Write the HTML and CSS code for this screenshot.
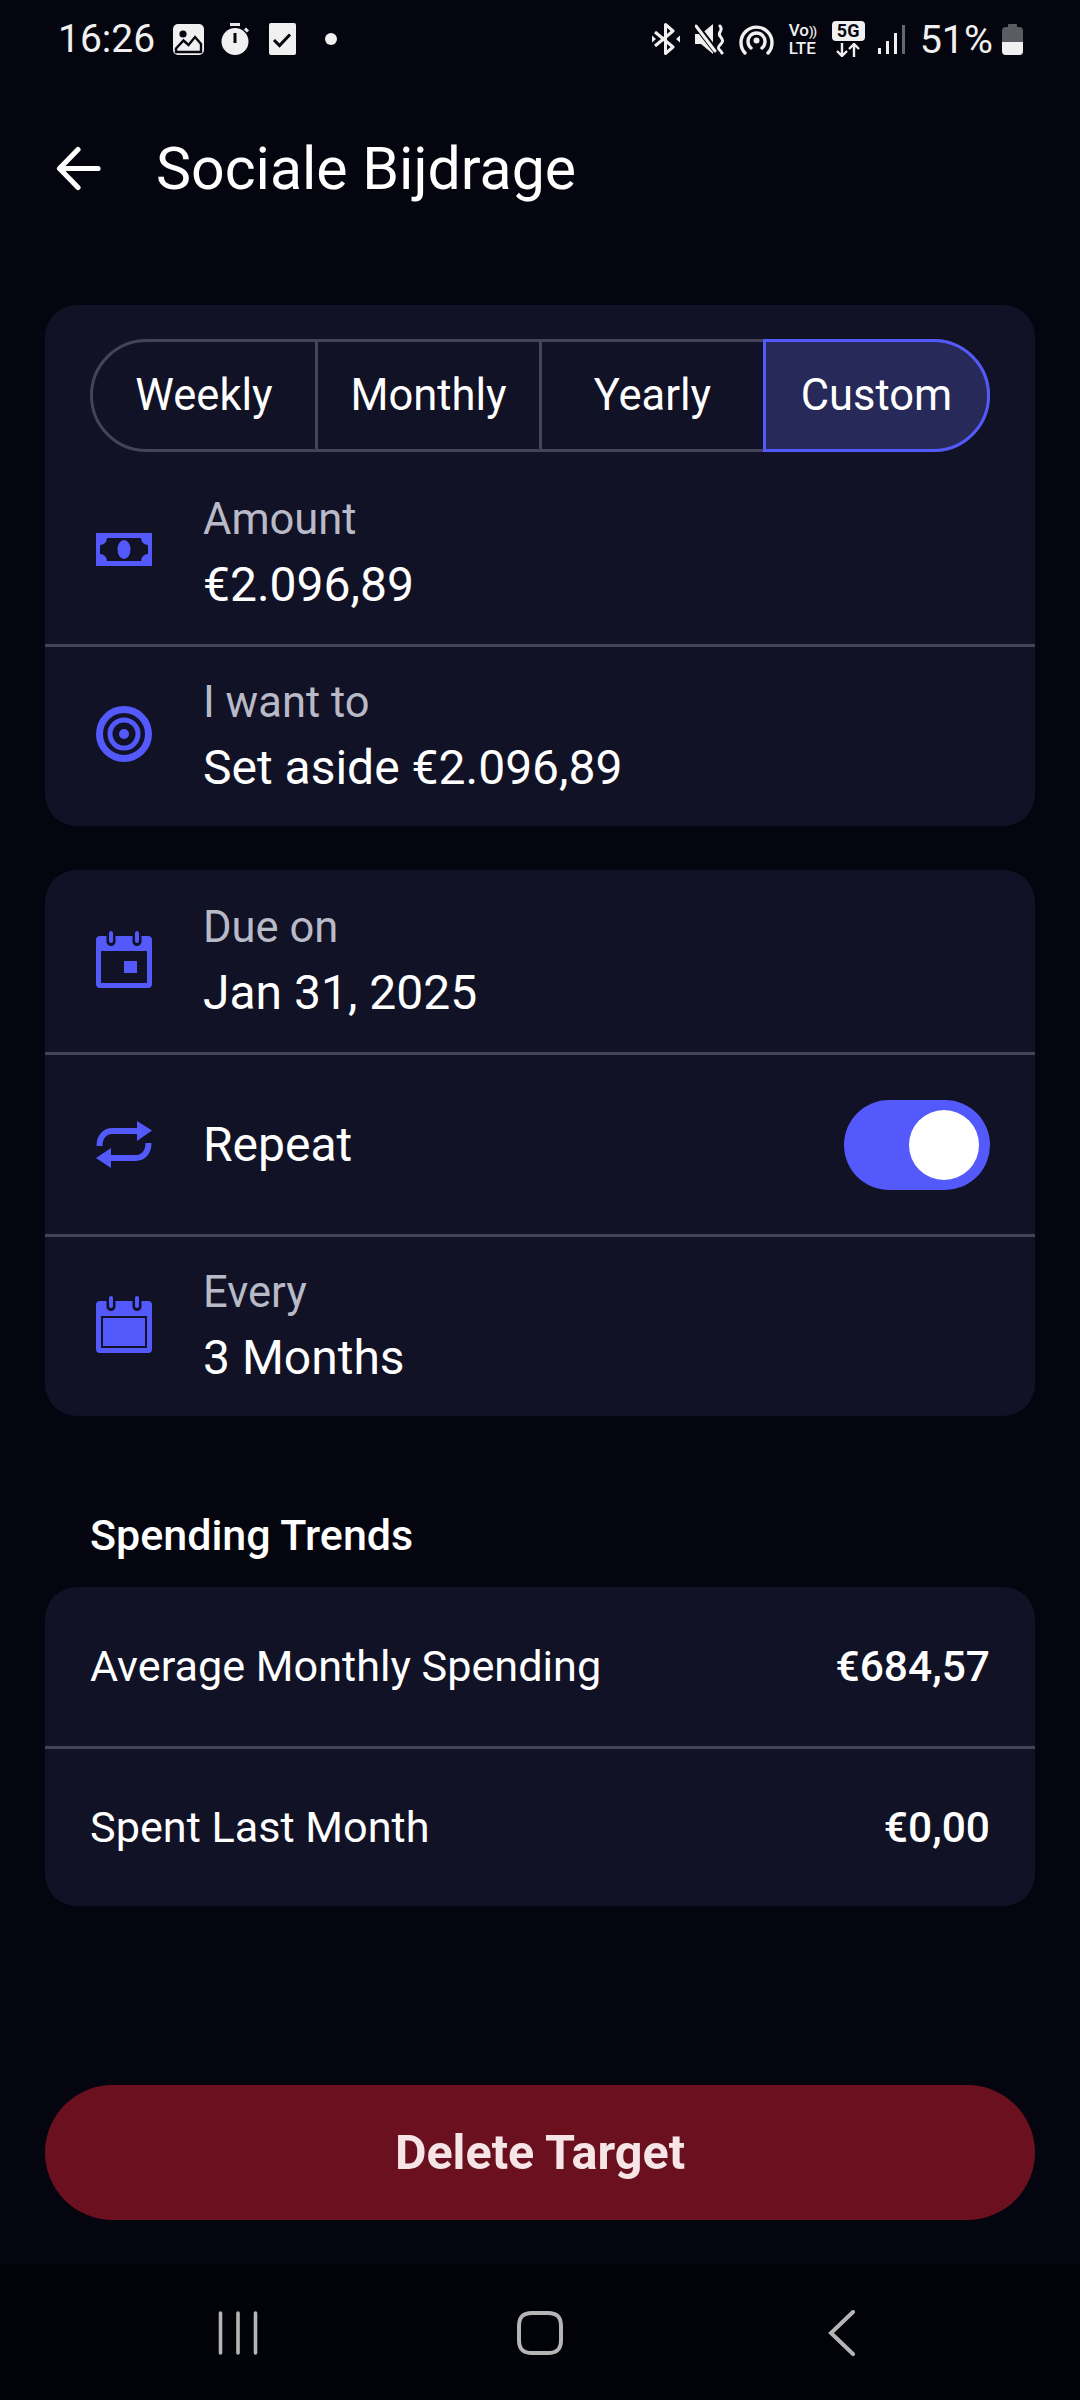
FILE: index.html
```html
<!DOCTYPE html>
<html lang="en">
<head>
<meta charset="utf-8">
<title>Sociale Bijdrage</title>
<link rel="stylesheet" href="styles.css">
</head>
<body>
<div class="phone">
  <header class="status">
    <div class="status-left">
      <span class="time">16:26</span>
      <svg class="s-img" viewBox="0 0 31 31"><rect width="31" height="31" rx="5" fill="#f0f0f0"/><circle cx="10" cy="10" r="3.6" fill="#05060f"/><path d="M3 24.5l7.500-8 5 4.500 6.500-8 6 7v8H3z" fill="#f0f0f0" stroke="#05060f" stroke-width="2.400"/></svg>
      <svg class="s-timer" viewBox="0 0 28 32"><path d="M9 1.500h10" stroke="#e8e8e8" stroke-width="3"/><circle cx="14" cy="18.500" r="13.500" fill="#f0f0f0"/><path d="M24 5.500l3 3" stroke="#e8e8e8" stroke-width="3"/><path d="M14 10v10" stroke="#05060f" stroke-width="3"/></svg>
      <svg class="s-check" viewBox="0 0 27 32"><rect width="27" height="32" rx="2" fill="#f0f0f0"/><path d="M5 17l5.500 5.500L21 11.500" fill="none" stroke="#05060f" stroke-width="3"/></svg>
      <span class="dot"></span>
    </div>
    <div class="status-right">
      <svg class="s-bt" viewBox="0 0 28 32"><path d="M3 9l18 15-7.500 6.500V1.500L21 8 3 23" fill="none" stroke="#f0f0f0" stroke-width="3" stroke-linejoin="round"/><path d="M0 12.500v7l4-3.500zM28 12.500v7l-4-3.500z" fill="#f0f0f0"/></svg>
      <svg class="s-mute" viewBox="0 0 30 32"><path d="M0 11h6l12-10v30L6 21H0z" fill="#f0f0f0"/><path d="M0 1l20 26" stroke="#05060f" stroke-width="6"/><path d="M1 3l19 25" stroke="#f0f0f0" stroke-width="3" stroke-linecap="round"/><path d="M25 3c4 5-3 6 0 10s4 5 0 9 0 4 2 8" fill="none" stroke="#f0f0f0" stroke-width="3" stroke-linecap="round"/></svg>
      <svg class="s-hot" viewBox="0 0 35 32"><g fill="none" stroke="#f0f0f0" stroke-width="3.400" stroke-linecap="round"><path d="M6 30a15.500 15.500 0 1 1 23 0"/><path d="M12 25a8.500 8.500 0 1 1 11 0"/></g><circle cx="17.500" cy="17.500" r="3" fill="#f0f0f0"/></svg>
      <span class="volte"><b>Vo<i>))</i></b><b>LTE</b></span>
      <span class="fiveg"><b>5G</b><svg class="arrows" viewBox="0 0 26 14"><path d="M7 0v12M2 8l5 5 5-5M19 14V2M14 6l5-5 5 5" fill="none" stroke="#f0f0f0" stroke-width="2.400"/></svg></span>
      <svg class="s-bars" viewBox="0 0 27 29"><path d="M1.500 23v6M9.500 16v13M17.500 8v21" stroke="#f0f0f0" stroke-width="3"/><path d="M25.500 0v29" stroke="#66666c" stroke-width="3"/></svg>
      <span class="pct">51%</span>
      <svg class="s-batt" viewBox="0 0 21 31"><rect x="6" width="9" height="4" rx="1" fill="#5b5b62"/><rect y="3" width="21" height="28" rx="4" fill="#5b5b62"/><path d="M0 18h21v9a4 4 0 0 1-4 4H4a4 4 0 0 1-4-4z" fill="#f0f0f0"/></svg>
    </div>
  </header>

  <div class="appbar">
    <svg class="back" viewBox="0 0 46 46"><path d="M43 23.500H5M23 4.500L4.500 23.500 23 42.500" fill="none" stroke="#fff" stroke-width="5.200" stroke-linecap="round" stroke-linejoin="round"/></svg>
    <h1>Sociale Bijdrage</h1>
  </div>

  <main class="content">
    <section class="card first">
      <div class="segments">
        <div class="seg">Weekly</div>
        <div class="seg">Monthly</div>
        <div class="seg">Yearly</div>
        <div class="seg on">Custom</div>
      </div>
      <div class="row short">
        <svg class="ic ic-money" viewBox="0 0 56 33"><path fill-rule="evenodd" d="M0 0h56v33H0zM11 5a7 7 0 0 1-7 7v9a7 7 0 0 1 7 7h34a7 7 0 0 1 7-7v-9a7 7 0 0 1-7-7zM28 7a6.500 9.500 0 1 0 0 19a6.500 9.500 0 1 0 0-19z" fill="#5359fa"/></svg>
        <div class="txt"><div class="lab">Amount</div><div class="val">€2.096,89</div></div>
      </div>
      <div class="row">
        <svg class="ic ic-target" viewBox="0 0 56 56"><g fill="none" stroke="#5359fa"><circle cx="28" cy="28" r="24.500" stroke-width="7"/><circle cx="28" cy="28" r="14" stroke-width="5"/></g><circle cx="28" cy="28" r="5" fill="#5359fa"/></svg>
        <div class="txt"><div class="lab">I want to</div><div class="val">Set aside €2.096,89</div></div>
      </div>
    </section>

    <section class="card">
      <div class="row">
        <svg class="ic ic-cal" viewBox="0 0 56 57"><rect y="5" width="56" height="52" rx="4" fill="#5359fa"/><g fill="#111226"><rect x="10.500" y="1" width="9" height="14" rx="4.500"/><rect x="36.500" y="1" width="9" height="14" rx="4.500"/><rect x="5" y="20" width="46" height="32"/></g><g fill="#5359fa"><rect x="13" y="0" width="4" height="12" rx="2"/><rect x="39" y="0" width="4" height="12" rx="2"/><rect x="28" y="30" width="13" height="12"/></g></svg>
        <div class="txt"><div class="lab">Due on</div><div class="val">Jan 31, 2025</div></div>
      </div>
      <div class="row">
        <svg class="ic ic-rep" viewBox="0 0 56 47"><path d="M3.500 25c0-9 5-15 13-15H44M52.500 22c0 9-5 15-13 15H12" fill="none" stroke="#5359fa" stroke-width="6"/><path d="M41 0l15 9.500L41 20zM15 27L0 37l15 10z" fill="#5359fa"/></svg>
        <div class="txt"><div class="val">Repeat</div></div>
        <div class="toggle"><span class="knob"></span></div>
      </div>
      <div class="row">
        <svg class="ic ic-cal" viewBox="0 0 56 57"><rect y="5" width="56" height="52" rx="4" fill="#5359fa"/><g fill="#111226"><rect x="10.500" y="1" width="9" height="14" rx="4.500"/><rect x="36.500" y="1" width="9" height="14" rx="4.500"/><rect x="5" y="20" width="46" height="32"/></g><g fill="#5359fa"><rect x="13" y="0" width="4" height="12" rx="2"/><rect x="39" y="0" width="4" height="12" rx="2"/><rect x="7" y="22" width="42" height="28"/></g></svg>
        <div class="txt"><div class="lab">Every</div><div class="val">3 Months</div></div>
      </div>
    </section>

    <h2>Spending Trends</h2>
    <section class="card">
      <div class="trend"><span>Average Monthly Spending</span><strong>€684,57</strong></div>
      <div class="trend"><span>Spent Last Month</span><strong>€0,00</strong></div>
    </section>

    <button class="delete">Delete Target</button>
  </main>

  <nav class="navbar">
    <svg class="nv" viewBox="0 0 46 46"><path d="M5.500 3v40M23 3v40M40.500 3v40" stroke="#b5b5b5" stroke-width="3.600" stroke-linecap="round"/></svg>
    <svg class="nv" viewBox="0 0 46 46"><path d="M15 3h16c9 0 13 4 13 13v14c0 9-4 13-13 13H15c-9 0-13-4-13-13V16C2 7 6 3 15 3z" fill="none" stroke="#b5b5b5" stroke-width="4"/></svg>
    <svg class="nv" viewBox="0 0 46 46"><path d="M34 2L12 23l22 21" fill="none" stroke="#b5b5b5" stroke-width="4" stroke-linecap="round"/></svg>
  </nav>
</div>
</body>
</html>
```
FILE: styles.css
```css
* { box-sizing: border-box; margin: 0; padding: 0; }
html, body { background: #04050e; }
body { font-family: Roboto, sans-serif; color: #fff; }
.phone { width: 1080px; height: 2400px; display: flex; flex-direction: column; overflow: hidden; background: #04050e; }

.status { height: 78px; padding: 0 57px 0 58px; display: flex; justify-content: space-between; align-items: center; color: #f0f0f0; }
.status-left, .status-right { display: flex; align-items: center; }
.time { font-size: 39px; width: 115px; }
.s-img { width: 31px; height: 31px; }
.s-timer { width: 28px; height: 32px; margin-left: 17px; }
.s-check { width: 27px; height: 32px; margin-left: 20px; }
.dot { width: 12px; height: 12px; border-radius: 50%; background: #f0f0f0; margin-left: 29px; }

.s-bt { width: 28px; height: 32px; }
.s-mute { width: 30px; height: 32px; margin-left: 15px; }
.s-hot { width: 35px; height: 32px; margin-left: 14px; }
.volte { width: 31px; margin-left: 15px; display: flex; flex-direction: column; font-size: 17px; line-height: 17px; }
.volte b { font-weight: 500; white-space: nowrap; }
.volte i { font-style: normal; font-size: 13px; letter-spacing: -1px; }
.fiveg { width: 33px; margin-left: 12px; display: flex; flex-direction: column; align-items: center; }
.fiveg b { width: 33px; height: 20px; background: #f0f0f0; color: #05060f; font-size: 18px; line-height: 20px; font-weight: 700; text-align: center; border-radius: 4px; }
.arrows { width: 26px; height: 14px; margin-top: 2px; }
.s-bars { width: 27px; height: 29px; margin-left: 13px; }
.pct { font-size: 39.500px; margin-left: 15px; }
.s-batt { width: 21px; height: 31px; margin-left: 9px; }

.appbar { height: 104px; margin-top: 38px; display: flex; align-items: center; padding-left: 55px; gap: 55px; }
.back { width: 46px; height: 46px; }
h1 { font-size: 59px; font-weight: 400; }

.content { flex: 1; padding: 0 45px; display: flex; flex-direction: column; }
.card { background: #111226; border-radius: 32px; margin-top: 44px; overflow: hidden; }
.first { margin-top: 85px; padding-top: 34px; }
.segments { display: grid; grid-template-columns: 222px 224px 224px 224px; margin: 0 45px; height: 113px; border: 3px solid #45435a; border-radius: 57px; }
.seg { display: flex; align-items: center; justify-content: center; font-size: 43.5px; border-left: 3px solid #45435a; }
.seg:first-child { border-left: 0; }
.seg.on { background: #272959; border: 3px solid #5359fa; border-radius: 0 57px 57px 0; margin: -3px -3px -3px 0; }
.row { height: 182px; display: flex; align-items: center; padding: 0 45px 0 51px; border-top: 3px solid #45435a; }
.row:first-child { border-top: 0; }
.row.short { height: 192px; border-top: 0; }
.row.short .txt { padding-top: 10px; }
.ic { width: 56px; height: 56px; flex: none; }
.ic-money { height: 33px; margin-top: 3px; }
.ic-target { margin-bottom: 5px; }
.ic-cal { height: 57px; margin-bottom: 4px; }
.ic-rep { height: 47px; }
.txt { margin-left: 51px; flex: 1; }
.lab { font-size: 43.5px; color: #b9bac8; line-height: 56px; }
.val { font-size: 48px; line-height: 60px; }
.lab + .val { margin-top: 7px; }
.toggle { width: 146px; height: 90px; border-radius: 45px; background: #5359fa; display: flex; align-items: center; justify-content: flex-end; padding-right: 11px; }
.knob { width: 70px; height: 70px; border-radius: 50%; background: #fff; }

h2 { font-size: 43px; font-weight: 500; padding-left: 45px; margin-top: 94px; line-height: 50px; }
h2 + .card { margin-top: 27px; }
.trend { height: 159px; display: flex; align-items: center; justify-content: space-between; padding: 0 45px; font-size: 43.200px; border-top: 3px solid #45435a; }
.trend:first-child { border-top: 0; }
.trend:last-child { height: 160px; }
.trend strong { font-weight: 500; font-size: 42.500px; }

.delete { margin-top: 179px; height: 135px; border: 0; border-radius: 68px; background: #6a101f; color: #f5e5e7; font: 700 48.500px Roboto, sans-serif; }

.navbar { height: 135px; display: grid; grid-template-columns: repeat(3, 302px); justify-content: center; justify-items: center; align-items: center; background: #020308; }
.nv { width: 46px; height: 46px; }
```
